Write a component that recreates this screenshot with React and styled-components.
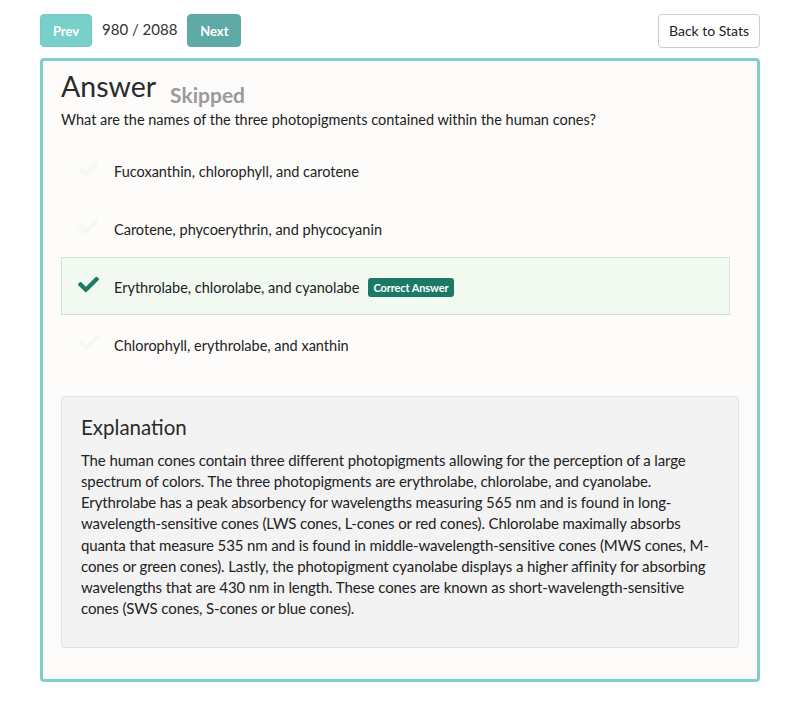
import React from "react";
import styled, { createGlobalStyle } from "styled-components";
import { FaCheck } from "react-icons/fa";

const Global = createGlobalStyle`
  html, body { margin: 0; padding: 0; background: #fff; }
  body { font-family: Lato, "Open Sans", sans-serif; color: #333; }
`;

const Page = styled.div`
  padding: 14px 40px 20px 40px;
  width: 720px;
`;

const Toolbar = styled.div`
  display: flex;
  align-items: center;
  height: 33px;
  margin-bottom: 11px;
`;

const NavButton = styled.button`
  height: 33px;
  width: ${p => p.$w}px;
  padding: 0;
  border-radius: 4px;
  border: 1px solid ${p => (p.$dark ? "#5fa9a5" : "#74c9c4")};
  background: ${p => (p.$dark ? "#5faaa6" : "#79cfca")};
  color: #fff;
  font-family: Lato, sans-serif;
  font-weight: 700;
  font-size: 13px;
`;

const Counter = styled.span`
  font-size: 15px;
  color: #333;
  margin: 0 10px 0 10px;
  position: relative;
  top: -2px;
`;

const Spacer = styled.div`
  flex: 1;
`;

const BackButton = styled.button`
  height: 34px;
  width: 102px;
  padding: 0;
  border-radius: 4px;
  border: 1px solid #ccc;
  background: #fff;
  color: #222;
  font-family: Lato, sans-serif;
  font-size: 14px;
`;

const Card = styled.div`
  border: 3px solid #7ecfcb;
  border-radius: 4px;
  background: #fdfcfa;
  padding: 7px 18px 31px 18px;
`;

const HeadRow = styled.div`
  display: flex;
  align-items: flex-end;
  gap: 14px;
`;

const Title = styled.h1`
  margin: 0;
  font-size: 28.5px;
  font-weight: 400;
  color: #2a2a2a;
  line-height: 36px;
`;

const Status = styled.span`
  font-size: 21px;
  font-weight: 700;
  color: #9a9a9a;
  line-height: 28px;
  position: relative;
  top: 5px;
`;

const Question = styled.p`
  margin: 6px 0 11px 0;
  font-size: 14.5px;
  line-height: 20px;
  color: #222;
`;

const Options = styled.div`
  display: flex;
  flex-direction: column;
  margin-right: 9px;
`;

const Option = styled.div`
  display: flex;
  align-items: center;
  height: 58px;
  box-sizing: border-box;
  padding-left: 16px;
  padding-top: 3px;
  border: 1px solid ${p => (p.$correct ? "#cfe6cf" : "transparent")};
  background: ${p => (p.$correct ? "#f1f9f1" : "transparent")};
  font-size: 14.5px;
  color: #222;
`;

const CheckBox = styled.span`
  display: inline-flex;
  width: 22px;
  margin-right: 14px;
  color: ${p => (p.$on ? "#1a7a66" : "#f7f7f5")};
  font-size: 21px;
  position: relative;
  top: -3px;
`;

const Badge = styled.span`
  margin-left: 9px;
  background: #1a7a66;
  color: #fff;
  font-size: 11px;
  font-weight: 700;
  height: 19px;
  line-height: 19px;
  padding: 0 5px;
  border-radius: 3px;
  letter-spacing: -0.1px;
`;

const Explanation = styled.div`
  margin-top: 23px;
  background: #f3f3f3;
  border: 1px solid #e2e2e2;
  border-radius: 4px;
  padding: 16px 19px 28px 19px;
`;

const ExpTitle = styled.h2`
  margin: 0 0 9px 0;
  font-size: 20.5px;
  font-weight: 400;
  color: #2a2a2a;
  line-height: 28px;
`;

const ExpText = styled.p`
  margin: 0;
  font-size: 15px;
  line-height: 21.15px;
  letter-spacing: -0.12px;
  color: #222;
`;

const options = [
  { text: "Fucoxanthin, chlorophyll, and carotene" },
  { text: "Carotene, phycoerythrin, and phycocyanin" },
  { text: "Erythrolabe, chlorolabe, and cyanolabe", correct: true },
  { text: "Chlorophyll, erythrolabe, and xanthin" },
];

export default function App() {
  return (
    <>
      <Global />
      <Page>
        <Toolbar>
          <NavButton $w={52}>Prev</NavButton>
          <Counter>980 / 2088</Counter>
          <NavButton $dark $w={54}>Next</NavButton>
          <Spacer />
          <BackButton>Back to Stats</BackButton>
        </Toolbar>
        <Card>
          <HeadRow>
            <Title>Answer</Title>
            <Status>Skipped</Status>
          </HeadRow>
          <Question>What are the names of the three photopigments contained within the human cones?</Question>
          <Options>
            {options.map((o, i) => (
              <Option key={i} $correct={o.correct}>
                <CheckBox $on={o.correct}>
                  <FaCheck />
                </CheckBox>
                <span>{o.text}</span>
                {o.correct && <Badge>Correct Answer</Badge>}
              </Option>
            ))}
          </Options>
          <Explanation>
            <ExpTitle>Explanation</ExpTitle>
            <ExpText>
              The human cones contain three different photopigments allowing for the perception of a large spectrum of colors. The three photopigments are erythrolabe, chlorolabe, and cyanolabe. Erythrolabe has a peak absorbency for wavelengths measuring 565 nm and is found in long-wavelength-sensitive cones (LWS cones, L-cones or red cones). Chlorolabe maximally absorbs quanta that measure 535 nm and is found in middle-wavelength-sensitive cones (MWS cones, M-cones or green cones). Lastly, the photopigment cyanolabe displays a higher affinity for absorbing wavelengths that are 430 nm in length. These cones are known as short-wavelength-sensitive cones (SWS cones, S-cones or blue cones).
            </ExpText>
          </Explanation>
        </Card>
      </Page>
    </>
  );
}
